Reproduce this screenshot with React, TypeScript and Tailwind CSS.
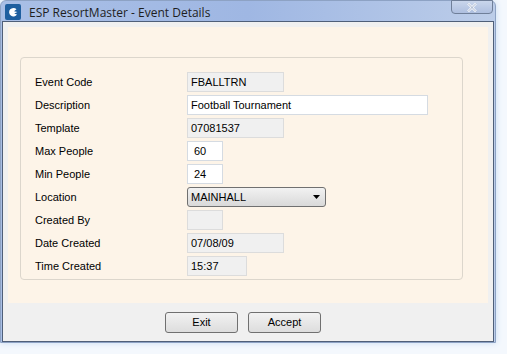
import React from "react";

const rows: { label: string; value: string; w: string; ro: boolean; select?: boolean }[] = [
  { label: "Event Code", value: "FBALLTRN", w: "w-[97px]", ro: true },
  { label: "Description", value: "Football Tournament", w: "w-[241px]", ro: false },
  { label: "Template", value: "07081537", w: "w-[97px]", ro: true },
  { label: "Max People", value: "60", w: "w-[36px]", ro: false },
  { label: "Min People", value: "24", w: "w-[36px]", ro: false },
  { label: "Location", value: "MAINHALL", w: "w-[139px]", ro: false, select: true },
  { label: "Created By", value: "", w: "w-[36px]", ro: true },
  { label: "Date Created", value: "07/08/09", w: "w-[97px]", ro: true },
  { label: "Time Created", value: "15:37", w: "w-[60px]", ro: true },
];

function Field({ r }: { r: (typeof rows)[number] }) {
  if (r.select) {
    return (
      <div className={`${r.w} h-[20px] rounded-[3px] border border-[#707070] bg-gradient-to-b from-[#f2f2f2] to-[#d9d9d9] flex items-center pl-[3px] pr-[5px] justify-between`}>
        <span>{r.value}</span>
        <svg width="7" height="4" viewBox="0 0 7 4"><path d="M0 0h7L3.5 4z" fill="#000" /></svg>
      </div>
    );
  }
  return (
    <div
      className={`${r.w} h-[20px] border ${r.ro ? "bg-[#f0f0f0] border-[#dcdcdc]" : "bg-white border-[#d5dbe2]"} flex items-center ${r.label.includes("People") ? "pl-[6px]" : "pl-[3px]"}`}
    >
      {r.value}
    </div>
  );
}

export default function App() {
  return (
    <div
      className="w-[507px] h-[354px] overflow-hidden bg-[#f4f8fd] text-[11px] text-black"
      style={{ fontFamily: '"Liberation Sans", Arial, sans-serif' }}
    >
      <div className="w-[496px] h-[343px] bg-gradient-to-r from-[#a9bfe6] via-[#9fb7e3] to-[#bccde9] border border-[#8da2c4] rounded-t-[6px] flex flex-col shadow-[0_0_6px_#c9dcf3]">
        {/* title bar */}
        <div className="h-[20px] flex items-start relative">
          <div className="ml-[4px] mt-[3px] w-[16px] h-[16px] rounded-[2px] bg-[#1f5f9f] flex items-center justify-center">
            <svg width="12" height="12" viewBox="0 0 12 12">
              <path d="M9.5 3.2A4.3 4.3 0 1 0 10 8.6L7.2 7.6 10.4 6 7 5.2z" fill="#fff" />
            </svg>
          </div>
          <span
            className="ml-[8px] mt-[3px] text-[12px] text-[#1e1e1e]"
            style={{ fontFamily: '"Open Sans", "Noto Sans", sans-serif' }}
          >
            ESP ResortMaster - Event Details
          </span>
          <div className="absolute right-[2px] top-[-1px] w-[42px] h-[14px] rounded-b-[4px] border border-[#6f7f99] bg-gradient-to-b from-[#c9d6ec] to-[#aebfdf] flex items-center justify-center">
            <svg width="10" height="9" viewBox="0 0 10 9">
              <path d="M1 0.5 9 8.5M9 0.5 1 8.5" stroke="#fff" strokeWidth="2.2" />
              <path d="M1 0.5 9 8.5M9 0.5 1 8.5" stroke="#8d9fbd" strokeWidth="0.8" />
            </svg>
          </div>
        </div>
        {/* client */}
        <div className="ml-[1px] mr-[1px] flex-1 border border-[#4f5f79] bg-[#f0f0f0] flex flex-col px-[5px] pt-[5px]">
          <div className="h-[276px] bg-[#fdf4e8] px-[12px] pt-[30px]">
            <div className="w-[443px] h-[223px] rounded-[4px] border border-[#dcd6cc] pl-[14px] pt-[14px] flex flex-col gap-[3px]">
              {rows.map((r) => (
                <div key={r.label} className="flex items-center h-[20px]">
                  <span className="w-[152px]">{r.label}</span>
                  <Field r={r} />
                </div>
              ))}
            </div>
          </div>
          <div className="flex-1 flex items-center justify-center gap-[10px] pr-[10px]">
            <button className="w-[73px] h-[21px] rounded-[3px] border border-[#707070] bg-gradient-to-b from-[#f2f2f2] to-[#dddddd]">Exit</button>
            <button className="w-[73px] h-[21px] rounded-[3px] border border-[#707070] bg-gradient-to-b from-[#f2f2f2] to-[#dddddd]">Accept</button>
          </div>
        </div>
      </div>
    </div>
  );
}
